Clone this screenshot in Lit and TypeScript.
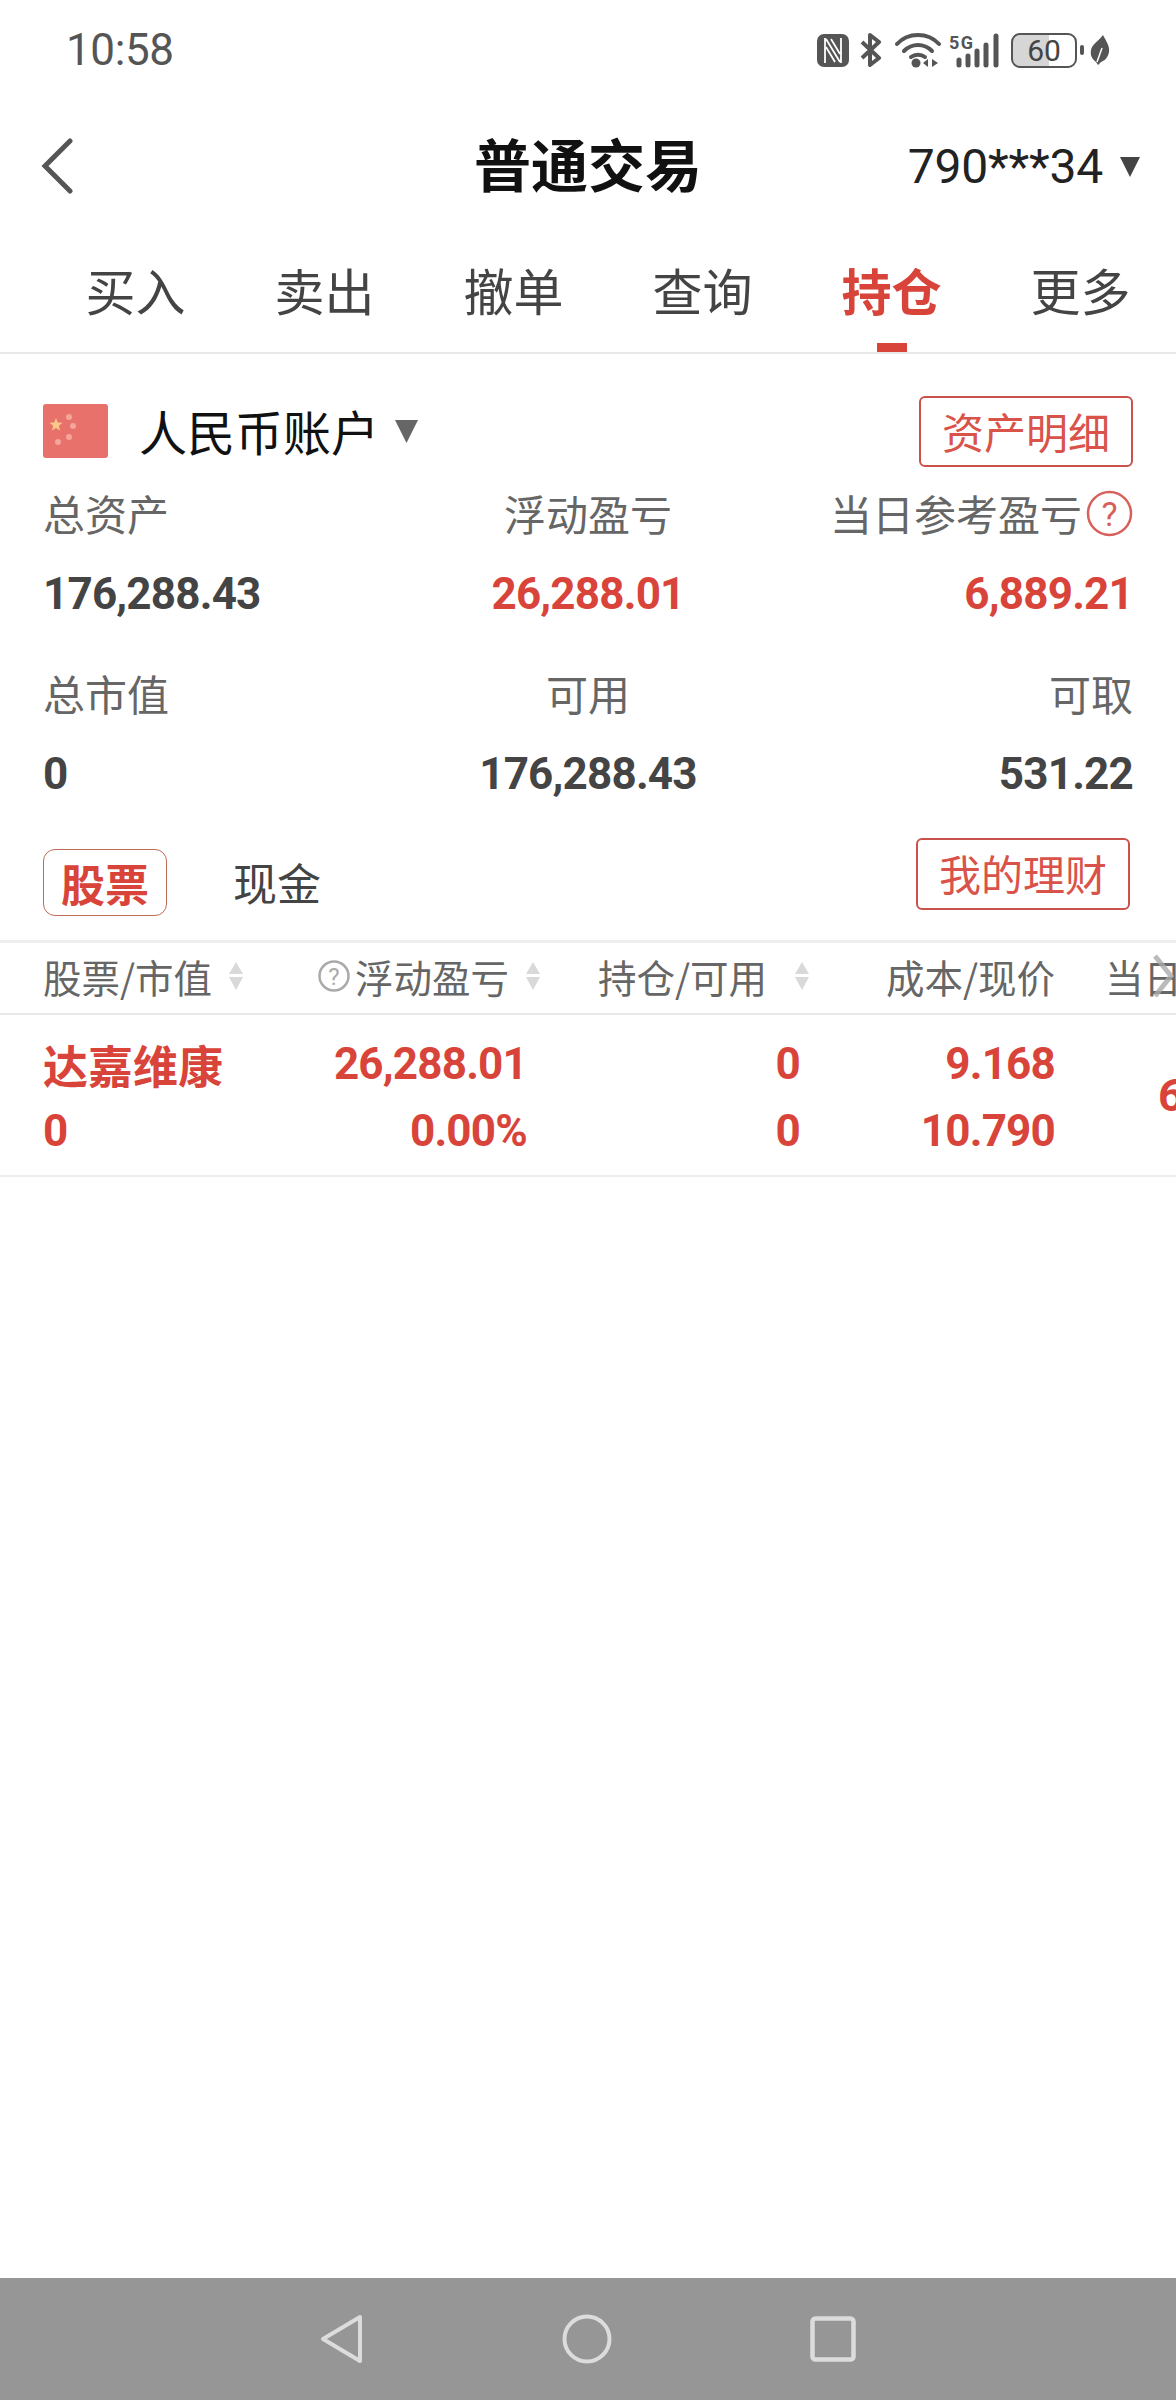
import { LitElement, html, css } from 'lit';
import { customElement } from 'lit/decorators.js';

const sortArrows = html`<svg class="sort" width="16" height="28" viewBox="0 0 16 28">
  <path d="M8 0L15 12H1Z M1 15H15L8 28Z" fill="#d9d9d9"></path>
</svg>`;

@customElement('app-root')
export class AppRoot extends LitElement {
  static styles = css`
    :host {
      display: flex;
      flex-direction: column;
      height: 2400px;
      background: #fff;
      overflow: hidden;
      font-family: 'Noto Sans CJK SC', Roboto, sans-serif;
      color: #444;
    }
    .red { color: #d9443a; }

    .status {
      height: 100px;
      display: flex;
      align-items: center;
      padding: 0 66px 0 66px;
    }
    .time { font: 400 44px Roboto, sans-serif; color: #555; letter-spacing: -0.4px; }
    .status-icons { margin-left: auto; display: flex; align-items: center; }
    .bt { margin-left: 10px; }
    .wifi { margin-left: 12px; }
    .signal { margin-left: 8px; }
    .battery {
      width: 66px;
      height: 35px;
      box-sizing: border-box;
      margin-left: 10px;
      border: 2.5px solid #555;
      border-radius: 9px;
      background: linear-gradient(90deg, #d6d6d6 58%, #fff 58%);
      display: flex;
      align-items: center;
      justify-content: center;
      font: 400 30px Roboto, sans-serif;
      color: #444;
    }
    .nub { width: 4px; height: 10px; margin: 0 6px 0 3px; background: #555; border-radius: 2px; }

    .title-bar {
      height: 132px;
      position: relative;
      display: flex;
      align-items: center;
      justify-content: center;
    }
    .back { position: absolute; left: 40px; top: 38px; }
    h1 { margin: 0 0 8px; font-size: 57px; font-weight: 700; color: #111; }
    .account {
      position: absolute;
      right: 36px;
      top: 38px;
      display: flex;
      align-items: center;
      gap: 17px;
      font: 400 48px Roboto, sans-serif;
      color: #222;
      letter-spacing: -0.2px;
    }

    .tabs {
      height: 120px;
      padding-left: 41px;
      display: grid;
      grid-template-columns: repeat(6, 189px);
      border-bottom: 2px solid #e8e8e8;
    }
    .tab {
      position: relative;
      display: flex;
      align-items: center;
      justify-content: center;
      padding-bottom: 6px;
      font-size: 50px;
      color: #444;
    }
    .tab.on { color: #d9443a; font-weight: 700; }
    .tab.on::after {
      content: '';
      position: absolute;
      left: 80px;
      bottom: 0;
      width: 30px;
      height: 9px;
      background: #d9443a;
    }

    .summary { padding: 42px 43px 0; }
    .account-row { display: flex; align-items: center; height: 71px; }
    .flag { margin: 0 31px 2px 0; }
    .account-name { font-size: 48px; color: #111; margin: 0 16px 4px 0; }
    .outline {
      box-sizing: border-box;
      width: 214px;
      height: 71px;
      margin-left: auto;
      padding-bottom: 3px;
      border: 2px solid #c9524c;
      border-radius: 6px;
      display: flex;
      align-items: center;
      justify-content: center;
      font-size: 42px;
      color: #d9534a;
    }
    .stats {
      display: grid;
      grid-template-columns: 1fr 1fr 1fr;
      margin-top: 24px;
    }
    .stats > div:nth-child(3n + 2) { text-align: center; }
    .stats > div:nth-child(3n) { text-align: right; justify-content: flex-end; }
    .label {
      height: 48px;
      margin: -2px 0 2px;
      line-height: 48px;
      font-size: 42px;
      color: #666;
      display: flex;
      white-space: nowrap;
    }
    .stats > .label:nth-child(3n + 2) { justify-content: center; }
    .value {
      height: 50px;
      margin: 30px 0 52px;
      font: 700 44px/50px Roboto, sans-serif;
      letter-spacing: -0.8px;
      color: #444;
    }
    .value.red { color: #d9443a; }
    .help { margin: 1px 0 0 4px; }

    .filters {
      display: flex;
      align-items: flex-start;
      padding: 0 46px 24px 43px;
      margin-top: -13px;
    }
    .pill {
      box-sizing: border-box;
      width: 124px;
      height: 67px;
      margin-top: 11px;
      border: 1.5px solid #bd6a58;
      border-radius: 12px;
      display: flex;
      align-items: center;
      justify-content: center;
      font-size: 44px;
      font-weight: 700;
      color: #d9443a;
    }
    .cash { margin: 11px 0 0 66px; height: 67px; line-height: 67px; font-size: 44px; color: #444; }
    .filters .outline { height: 72px; }

    .table { position: relative; overflow: hidden; }
    .cols {
      display: grid;
      grid-template-columns: 227px 275px 273px 237px 200px;
      padding-left: 43px;
      white-space: nowrap;
    }
    .head {
      height: 65px;
      padding-bottom: 5px;
      border-top: 3px solid #eeeeee;
      border-bottom: 2px solid #e8e8e8;
      align-items: center;
      font-size: 38.5px;
      color: #666;
    }
    .th { display: flex; align-items: center; justify-content: flex-end; }
    .th:first-child { justify-content: flex-start; }
    .th:last-child { justify-content: flex-start; padding-left: 50px; }
    .sort { margin-left: 16px; flex: none; }
    .th.profit { padding-right: 4px; }
    .th.hold { padding-right: 8px; }
    .th.hold .sort { margin-left: 27px; }
    .q { margin-right: 5px; flex: none; }
    .more { position: absolute; right: 2px; top: 14px; }

    .row {
      height: 160px;
      border-bottom: 2px solid #ececec;
      color: #d9443a;
      grid-template-rows: 96px 64px;
      font: 700 44px Roboto, sans-serif;
      letter-spacing: -0.8px;
    }
    .cell { display: flex; justify-content: flex-end; align-items: center; }
    .cell.top { padding-top: 2px; }
    .cell.bottom { padding-bottom: 25px; }
    .cell.pad { padding-right: 18px; }
    .cell.left { justify-content: flex-start; }
    .name { font: 700 45px 'Noto Sans CJK SC', sans-serif; letter-spacing: 0; }
    .day {
      grid-column: 5;
      grid-row: 1 / 3;
      display: flex;
      align-items: center;
      padding-left: 103px;
      font-size: 45px;
    }

    .nav {
      margin-top: auto;
      height: 122px;
      background: #969696;
      display: flex;
      align-items: center;
      justify-content: center;
      gap: 198px;
    }
  `;

  render() {
    return html`
      <div class="status">
        <span class="time">10:58</span>
        <div class="status-icons">
          <svg width="32" height="33" viewBox="0 0 32 33">
            <rect width="32" height="33" rx="7" fill="#555"></rect>
            <path d="M8 4V29M24 4V29M9 5L23 28M9 13L18 28M23 20L14 5" fill="none" stroke="#fff" stroke-width="1.8"></path>
          </svg>
          <svg class="bt" width="24" height="34" viewBox="0 0 24 34">
            <path d="M3 9L20 25L11 32V2L20 9L3 25" fill="none" stroke="#555" stroke-width="4" stroke-linejoin="round"></path>
          </svg>
          <svg class="wifi" width="46" height="36" viewBox="0 0 46 36">
            <g fill="none" stroke="#555" stroke-width="4" stroke-linecap="round">
              <path d="M2 12C13 0 33 0 44 12"></path>
              <path d="M9 19C17 11 29 11 37 19"></path>
              <path d="M16 25C20 22 26 22 30 25"></path>
            </g>
            <circle cx="21" cy="31" r="4.5" fill="#555"></circle>
            <path d="M33 27V35L28 31Z M37 27V35L43 31Z" fill="#555"></path>
          </svg>
          <svg class="signal" width="52" height="36" viewBox="0 0 52 36">
            <text x="0" y="17" font-family="Roboto" font-size="18" font-weight="700" fill="#555" textLength="24">5G</text>
            <g stroke="#555" stroke-width="5" stroke-linecap="round">
              <path d="M10 28V33M19 24V33M28 19V33M37 13V33M47 4V33"></path>
            </g>
          </svg>
          <div class="battery">60</div>
          <span class="nub"></span>
          <svg width="20" height="30" viewBox="0 0 20 30">
            <path d="M13 0C16 6 20 11 19 17C18 23 14 26 11 27L8 30L6 27C2 24 0 20 1 15C2 9 9 6 13 0Z" fill="#555"></path>
            <path d="M7 27L12 13" stroke="#fff" stroke-width="1.5"></path>
          </svg>
        </div>
      </div>

      <div class="title-bar">
        <svg class="back" width="34" height="56" viewBox="0 0 34 56">
          <path d="M30 3L5 28L30 53" fill="none" stroke="#555" stroke-width="5" stroke-linecap="round"></path>
        </svg>
        <h1>普通交易</h1>
        <div class="account">
          <span>790***34</span>
          <svg width="20" height="20" viewBox="0 0 20 20"><path d="M0 0H20L10 20Z" fill="#444"></path></svg>
        </div>
      </div>

      <div class="tabs">
        ${['买入', '卖出', '撤单', '查询', '持仓', '更多'].map(
          (t) => html`<div class="tab ${t === '持仓' ? 'on' : ''}">${t}</div>`
        )}
      </div>

      <div class="summary">
        <div class="account-row">
          <svg class="flag" width="65" height="54" viewBox="0 0 65 54">
            <rect width="65" height="54" rx="3" fill="#e8716b"></rect>
            <path d="M13 14L14.8 18.5L19.5 18.8L15.9 21.8L17 26.5L13 24L9 26.5L10.1 21.8L6.5 18.8L11.2 18.5Z" fill="#f8c98a"></path>
            <circle cx="26" cy="13" r="3" fill="#f4a69a"></circle>
            <circle cx="30" cy="22" r="3" fill="#f4a69a"></circle>
            <circle cx="26" cy="33" r="3" fill="#f4a69a"></circle>
            <circle cx="15" cy="38" r="3" fill="#f4a69a"></circle>
          </svg>
          <span class="account-name">人民币账户</span>
          <svg width="23" height="23" viewBox="0 0 23 23"><path d="M0 0H23L11.5 23Z" fill="#666"></path></svg>
          <div class="outline">资产明细</div>
        </div>
        <div class="stats">
          <div class="label">总资产</div>
          <div class="label">浮动盈亏</div>
          <div class="label">当日参考盈亏
            <svg class="help" width="47" height="47" viewBox="0 0 47 47">
              <circle cx="23.5" cy="23.5" r="21.5" fill="none" stroke="#d9605a" stroke-width="2.5"></circle>
              <text x="23.5" y="36" text-anchor="middle" font-family="Roboto" font-size="34" fill="#d9605a">?</text>
            </svg>
          </div>
          <div class="value">176,288.43</div>
          <div class="value red">26,288.01</div>
          <div class="value red">6,889.21</div>
          <div class="label">总市值</div>
          <div class="label">可用</div>
          <div class="label">可取</div>
          <div class="value">0</div>
          <div class="value">176,288.43</div>
          <div class="value">531.22</div>
        </div>
      </div>

      <div class="filters">
        <div class="pill">股票</div>
        <div class="cash">现金</div>
        <div class="outline">我的理财</div>
      </div>

      <div class="table">
        <div class="cols head">
          <div class="th">股票/市值${sortArrows}</div>
          <div class="th profit">
            <svg class="q" width="32" height="32" viewBox="0 0 32 32">
              <circle cx="16" cy="16" r="14.5" fill="none" stroke="#aaa" stroke-width="2.5"></circle>
              <text x="16" y="25" text-anchor="middle" font-family="Roboto" font-size="24" fill="#aaa">?</text>
            </svg>
            浮动盈亏${sortArrows}
          </div>
          <div class="th hold">持仓/可用${sortArrows}</div>
          <div class="th">成本/现价</div>
          <div class="th">当日参考盈亏</div>
        </div>
        <svg class="more" width="22" height="44" viewBox="0 0 22 44">
          <path d="M3 2L19 22L3 42" fill="none" stroke="#aaa" stroke-width="5" opacity="0.8"></path>
        </svg>
        <div class="cols row">
          <div class="cell top left name">达嘉维康</div>
          <div class="cell top pad">26,288.01</div>
          <div class="cell top pad">0</div>
          <div class="cell top">9.168</div>
          <div class="day">6,889.21</div>
          <div class="cell bottom left">0</div>
          <div class="cell bottom pad">0.00%</div>
          <div class="cell bottom pad">0</div>
          <div class="cell bottom">10.790</div>
        </div>
      </div>

      <div class="nav">
        <svg width="44" height="50" viewBox="0 0 44 50">
          <path d="M40 3V47L3 25Z" fill="none" stroke="#dcdcdc" stroke-width="4" stroke-linejoin="round"></path>
        </svg>
        <svg width="50" height="50" viewBox="0 0 50 50">
          <circle cx="25" cy="25" r="22.5" fill="none" stroke="#dcdcdc" stroke-width="4"></circle>
        </svg>
        <svg width="46" height="46" viewBox="0 0 46 46">
          <rect x="2.5" y="2.5" width="41" height="41" rx="3" fill="none" stroke="#dcdcdc" stroke-width="4.5"></rect>
        </svg>
      </div>
    `;
  }
}
